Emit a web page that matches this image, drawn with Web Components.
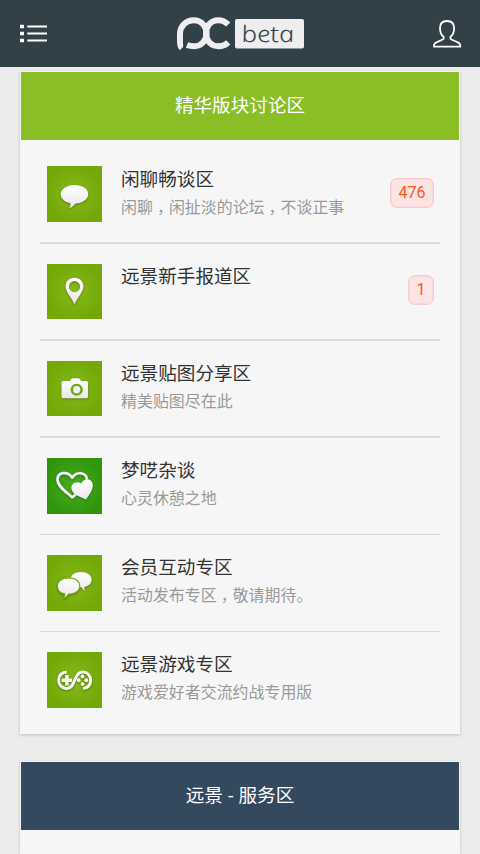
<!DOCTYPE html>
<html lang="zh-CN">
<head>
<meta charset="utf-8">
<title>PCbeta</title>
<style>
html,body{margin:0;background:#ececec;height:854px;overflow:hidden}
body{font-family:Roboto,"Noto Sans CJK SC",sans-serif;color:#333}
.c{display:inline-block;box-sizing:border-box;width:16px;padding-left:4px;font-family:"Noto Sans CJK SC",sans-serif;font-feature-settings:'halt';line-height:20px}
</style>
</head>
<body>
<forum-header></forum-header>
<forum-board heading="精华版块讨论区" style="--head:#8abd26">
  <forum-row class="first" icon="chat" heading="闲聊畅谈区" count="476">闲聊<span class="c">，</span>闲扯淡的论坛<span class="c">，</span>不谈正事</forum-row>
  <forum-row class="short" icon="pin" heading="远景新手报道区" count="1"></forum-row>
  <forum-row class="short" icon="camera" heading="远景贴图分享区">精美贴图尽在此</forum-row>
  <forum-row class="thin" icon="hearts" heading="梦呓杂谈">心灵休憩之地</forum-row>
  <forum-row class="thin" icon="chats" heading="会员互动专区">活动发布专区<span class="c">，</span>敬请期待。</forum-row>
  <forum-row class="last" icon="game" heading="远景游戏专区">游戏爱好者交流约战专用版</forum-row>
</forum-board>
<forum-board heading="远景 - 服务区" style="--head:#34495e;height:93px;margin-bottom:0"></forum-board>
<script>
const define = (name, render) => customElements.define(name, class extends HTMLElement {
  connectedCallback() {
    if (!this.shadowRoot) this.attachShadow({mode: 'open'}).innerHTML = render(this);
  }
});

define('forum-header', () => `
<style>
:host{display:flex;align-items:center;justify-content:space-between;height:67px;padding:0 18px 0 19px;box-sizing:border-box;background:#324047}
svg{display:block}
</style>
<svg width="29" height="20" viewBox="19 23.5 29 20" fill="none" stroke="#fff">
  <path d="M20 26h4M20 33h4M20 40h4" stroke-width="3.7"/><path d="M27.3 26H47M27.3 33H47M27.3 40H47" stroke-width="2"/>
</svg>
<svg width="130" height="36" viewBox="175 15.5 130 36">
  <g fill="none" stroke="#eee" stroke-width="6">
    <path d="M182 47.6Q180 45.6 180 41V33A13.7 13.4 0 0 1 193.5 19.7C203 19.7 206.6 27.5 206.6 33C206.6 40 201 45.7 194.4 45.7Q190 45.7 187 44.5"/>
    <path d="M228.2 24C225 20.8 221.5 19.7 218.4 19.7C209.5 19.7 206 27 206 33C206 40 211 45.7 218.4 45.7C222 45.7 225.5 44.6 228.2 41.8"/>
  </g>
  <path d="M183.6 34V48" stroke="#324047" stroke-width=".9"/>
  <rect x="235" y="18.5" width="69" height="29.5" rx="2" fill="#eee"/>
  <text transform="translate(243 41.3) skewX(13)" font-family="Open Sans,sans-serif" font-style="italic" font-size="22.5" font-weight="300" textLength="52.5" lengthAdjust="spacingAndGlyphs" fill="#324047" stroke="#324047" stroke-width=".2">beta</text>
</svg>
<svg width="30" height="30" viewBox="432 18.5 30 30" fill="none" stroke="#fff" stroke-width="1.8" stroke-linejoin="round">
  <path d="M447 20.5C442.5 20.5 440 23.2 440 27.5C440 32 441.2 34.5 443.6 36.3V38.3C442.8 39.8 437 40.8 434.8 43Q433.9 44 434 46.2H460.3Q460.4 44 459.5 43C457.3 40.8 451.5 39.8 450.5 38.3V36.3C452.9 34.5 454.1 32 454.1 27.5C454.1 23.2 451.5 20.5 447 20.5Z"/>
</svg>`);

define('forum-board', el => `
<style>
:host{display:block;box-sizing:border-box;margin:4px 20px 27px;background:#f6f6f6;box-shadow:0 1px 3px rgba(0,0,0,.2)}
header{border:1px solid #f6f6f6;border-bottom:0;height:68px;background:var(--head);background-clip:padding-box;color:#fff;font-family:"Noto Sans","Noto Sans CJK SC",sans-serif;font-size:18.6px;line-height:66px;text-align:center}
main{padding:6px 20px 0}
</style>
<header>${el.getAttribute('heading')}</header>
<main><slot></slot></main>`);

const bubble = (x, y) => `<path transform="translate(${x} ${y})" d="M0-9C8-9 13.8-5 13.8 0S8 9.3 1 9.3Q-2 13-5.2 14Q-3.6 11.5-4 9C-10 8-13.8 4.5-13.8 0S-8-9 0-9Z"/>`;
const small = 'd="M0-7.4C6.2-7.4 10.6-4.4 10.6 0S6 7.6-.3 7.6Q-2 10.3-4 11.2Q-3 9-3.3 7.4C-7.8 6.5-10.6 4-10.6 0S-6.2-7.4 0-7.4Z"';
const icons = {
  chat: bubble(27.5, 27.8),
  pin: '<path fill-rule="evenodd" d="M27.5 14C22.3 14 18.6 17.8 18.6 22.8C18.6 28 24 33.5 27.5 40.5C31 33.5 36.4 28 36.4 22.8C36.4 17.8 32.7 14 27.5 14ZM27.5 17.2A5.6 5.6 0 1 1 27.5 28.4A5.6 5.6 0 1 1 27.5 17.2Z"/>',
  camera: '<path d="M16 20.3H22.5L24.5 18Q25 17.4 26 17.4H31Q32 17.4 32.5 18L34.5 20.3H39.5Q41 20.3 41 22V35.8Q41 37.5 39.5 37.5H16Q14.5 37.5 14.5 35.8V22Q14.5 20.3 16 20.3Z"/><circle cx="29.7" cy="29" r="4.9" fill="none" stroke="#73a80b" stroke-width="2.5"/>',
  hearts: '<path fill="none" stroke="#f4f4f4" stroke-width="2.7" stroke-linejoin="round" d="M25.3 39C19 33.5 10.5 28 10.5 21.5C10.5 14 20.5 12.5 25.3 19.5C30 12.5 39.8 14.5 39.8 21.5C39.8 27 32 33 25.3 39Z"/><path transform="translate(36.1 31.5) rotate(-17)" d="M0 10C-5 6-10.9 2-10.9-3.5C-10.9-10-3-10.5 0-6.5C3-10.5 10.9-10 10.9-3.5C10.9 2 5 6 0 10Z"/>',
  chats: `<path transform="translate(34 24.3) scale(-1 1)" ${small}/><path transform="translate(21.6 30.6)" stroke="#76ab0e" stroke-width="2.2" paint-order="stroke" ${small}/>`,
  game: '<g fill="none" stroke="#f4f4f4"><path stroke-width="3" d="M19.8 19.8C14.8 19.8 11.6 23.5 11.6 28S15 36.3 20 36.3C28.5 36.3 26.5 19.8 36 19.8C40.5 19.8 43.6 23.5 43.6 28C43.6 32.5 40.8 35.5 36 36.3"/><path stroke-width="3.5" d="M14.7 28H25M19.9 22.8V33.2"/></g><circle cx="35.5" cy="24.2" r="1.9"/><circle cx="35.5" cy="31.8" r="1.9"/><circle cx="31.7" cy="28" r="1.9"/><circle cx="39.3" cy="28" r="1.9"/>'
};

define('board-icon', el => {
  const k = el.getAttribute('kind'), g = k === 'hearts';
  return `
<style>
:host{display:block;flex:none;background:radial-gradient(circle at 50% 50%,${g ? '#49ae20,#2f960c' : '#87b91b,#73a807'} 75%)}
svg{display:block;width:100%;height:100%;filter:drop-shadow(0 1px 1px rgba(0,0,0,.3))}
</style>
<svg viewBox="0 0 55 55.5" preserveAspectRatio="none"><defs><linearGradient id="w" x2="0" y2="1"><stop stop-color="#fff"/><stop offset="1" stop-color="#e8e8e8"/></linearGradient></defs><g fill="url(#w)">${icons[k]}</g></svg>`;
});

define('forum-row', el => {
  const n = el.getAttribute('count');
  return `
<style>
:host{display:flex;align-items:flex-start;box-sizing:border-box;height:97px;padding:20px 6px 0 7px;border-bottom:2px solid #dbdbdb}
:host(.first){height:98px}
:host(.first) .text{padding-top:1px}
:host(.thin){border-bottom-width:1px}
:host(.last){height:102px;border:0}
board-icon{width:55px;height:56px}
:host(.short) board-icon{height:55px}
.text{flex:1;padding-left:19px;white-space:nowrap}
h3{margin:0;font-weight:400;font-size:18.6px;line-height:26px}
p{margin:3px 0 0;height:24px;font-size:15.95px;line-height:24px;color:#999}
b{box-sizing:border-box;height:30px;margin-top:12px;padding:0 7.5px;border:1.5px solid #f8cccc;box-shadow:inset 0 0 0 .5px #f8cccc;border-radius:7px;background:#fce4e4;color:#f4581c;font-weight:400;font-size:16px;line-height:27px}
:host(.short) b{margin-top:11px}
</style>
<board-icon kind="${el.getAttribute('icon')}"></board-icon>
<div class="text"><h3>${el.getAttribute('heading')}</h3><p><slot></slot></p></div>
${n ? `<b>${n}</b>` : ''}`;
});
</script>
</body>
</html>
